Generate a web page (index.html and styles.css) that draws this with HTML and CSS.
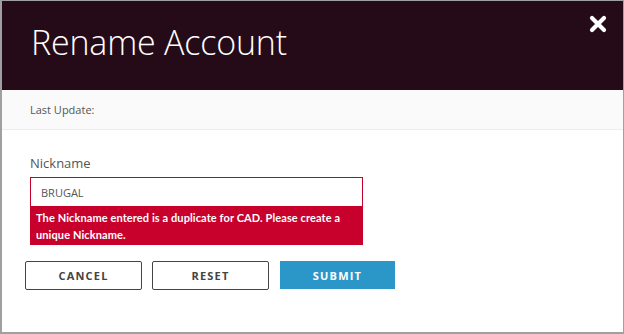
FILE: index.html
```html
<!DOCTYPE html>
<html>
<head>
<meta charset="utf-8">
<link rel="stylesheet" href="styles.css">
</head>
<body>
<div class="modal">
  <header class="head">
    <h1 class="title">Rename Account</h1>
    <button class="close" aria-label="Close">
      <svg width="18" height="18" viewBox="0 0 18 18"><path d="M3 3 L15 15 M15 3 L3 15" stroke="#fff" stroke-width="4.2" stroke-linecap="round"/></svg>
    </button>
  </header>
  <div class="meta">Last Update:</div>
  <div class="body">
    <label class="label">Nickname</label>
    <div class="field">
      <div class="input">BRUGAL</div>
      <div class="error">The Nickname entered is a duplicate for CAD. Please create a<br>unique Nickname.</div>
    </div>
    <div class="actions">
      <button class="btn btn-outline">CANCEL</button>
      <button class="btn btn-outline">RESET</button>
      <button class="btn btn-primary">SUBMIT</button>
    </div>
  </div>
</div>
</body>
</html>
```
FILE: styles.css
```css
* { box-sizing: border-box; }
html, body { margin: 0; padding: 0; background: #fff; }
body { font-family: "Open Sans", "Noto Sans", sans-serif; }
.modal {
  width: 624px;
  height: 334px;
  border: 1px solid #a0a0a0;
  border-left-width: 2px;
  border-bottom-width: 2px;
  background: #fff;
  display: flex;
  flex-direction: column;
}
.head {
  height: 89px;
  background: #250b17;
  display: flex;
  align-items: flex-start;
  justify-content: space-between;
  padding: 0 16px 0 29px;
  flex-shrink: 0;
}
.title {
  margin: 18px 0 0;
  font-weight: 300;
  font-size: 34px;
  color: #fff;
  line-height: 46px;
  letter-spacing: -0.2px;
}
.close {
  background: none;
  border: 0;
  padding: 0;
  margin-top: 14px;
  width: 18px;
  height: 18px;
  cursor: pointer;
}
.close svg { display: block; }
.meta {
  height: 40px;
  background: #fafafa;
  border-bottom: 1px solid #ececec;
  color: #555;
  font-size: 11px;
  padding: 0 0 0 28px;
  display: flex;
  align-items: center;
  flex-shrink: 0;
}
.body {
  padding: 24px 0 0 28px;
  display: flex;
  flex-direction: column;
}
.label {
  color: #555;
  font-size: 13px;
  line-height: 18px;
  margin-bottom: 5px;
}
.field { width: 333px; }
.input {
  height: 30px;
  border: 1px solid #c8002c;
  color: #555;
  font-size: 11px;
  padding: 0 10px;
  display: flex;
  align-items: center;
}
.error {
  background: #c8002c;
  color: #fff;
  font-family: Lato, "Open Sans", sans-serif;
  font-weight: 700;
  font-size: 11px;
  letter-spacing: 0.1px;
  line-height: 17px;
  padding: 2px 0 2px 6px;
  white-space: nowrap;
}
.actions {
  display: flex;
  gap: 10px;
  margin: 16px 0 0 -5px;
  align-items: flex-start;
}
.btn {
  width: 117px;
  height: 29px;
  font-family: "Open Sans", "Noto Sans", sans-serif;
  font-weight: 700;
  font-size: 11px;
  letter-spacing: 1.2px;
  cursor: pointer;
  padding: 0;
}
.btn-outline {
  background: #fff;
  border: 1px solid #444;
  border-radius: 2px;
  color: #444;
}
.btn-primary {
  width: 115px;
  height: 28px;
  background: #2a97c8;
  border: 0;
  color: #fff;
  margin-left: 1px;
}
```
